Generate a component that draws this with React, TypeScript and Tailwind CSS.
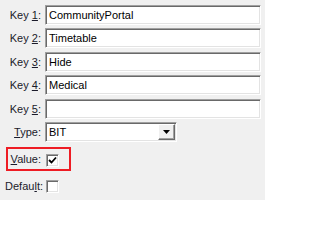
const font = { fontFamily: '"Liberation Sans", Arial, sans-serif' }

function Acc({ children }: { children: string }) {
  return <span className="underline underline-offset-[1px]">{children}</span>
}

const sunken =
  'border border-t-[#a0a0a0] border-l-[#a0a0a0] border-b-white border-r-white shadow-[inset_1px_1px_0_#696969,inset_-1px_-1px_0_#e3e3e3] bg-white'

function TextRow({ label, acc, value, top }: { label: string; acc: string; value: string; top: string }) {
  return (
    <div className={`flex items-center ${top}`}>
      <div className="w-[41px] text-right pr-0 text-[#1b1b2a] whitespace-nowrap">
        {label} <Acc>{acc}</Acc>:
      </div>
      <div className={`ml-[4px] w-[216px] h-[20px] flex items-center pl-[3px] text-black ${sunken}`}>{value}</div>
    </div>
  )
}

function Check({ checked }: { checked?: boolean }) {
  return (
    <div className={`w-[13px] h-[13px] flex items-center justify-center ${sunken}`}>
      {checked && (
        <svg width="9" height="9" viewBox="0 0 9 9">
          <path d="M1 4 L3.5 6.5 L8 1.5" stroke="#000" strokeWidth="1.8" fill="none" />
        </svg>
      )}
    </div>
  )
}

export default function App() {
  return (
    <div className="w-[265px] h-[200px] bg-[#f0f0f0] text-[11px] leading-none overflow-hidden pt-[5px]" style={font}>
      <TextRow label="Key" acc="1" value="CommunityPortal" top="" />
      <TextRow label="Key" acc="2" value="Timetable" top="mt-[3px]" />
      <TextRow label="Key" acc="3" value="Hide" top="mt-[4px]" />
      <TextRow label="Key" acc="4" value="Medical" top="mt-[3px]" />
      <TextRow label="Key" acc="5" value="" top="mt-[4px]" />

      <div className="flex items-center mt-[3px]">
        <div className="w-[41px] text-right text-[#1b1b2a]">
          <Acc>T</Acc>ype:
        </div>
        <div className={`ml-[4px] w-[132px] h-[20px] flex items-center ${sunken}`}>
          <span className="flex-1 pl-[3px] text-black">BIT</span>
          <div className="w-[17px] h-[16px] mr-[1px] flex items-center justify-center bg-[#f0f0f0] border border-t-white border-l-white border-b-[#696969] border-r-[#696969] shadow-[inset_-1px_-1px_0_#a0a0a0]">
            <svg width="7" height="4" viewBox="0 0 7 4">
              <path d="M0 0 H7 L3.5 4 Z" fill="#000" />
            </svg>
          </div>
        </div>
      </div>

      <div className="ml-[6px] mt-[5px] w-[65px] h-[24px] border-2 border-[#ee1c24] flex items-center">
        <div className="w-[33px] text-right text-[#1b1b2a] mt-[1px]">
          <Acc>V</Acc>alue:
        </div>
        <div className="ml-[5px] mt-[2px]">
          <Check checked />
        </div>
      </div>

      <div className="flex items-center mt-[9px]">
        <div className="w-[43px] text-right text-[#1b1b2a]">
          Defau<Acc>l</Acc>t:
        </div>
        <div className="ml-[3px]">
          <Check />
        </div>
      </div>
    </div>
  )
}
